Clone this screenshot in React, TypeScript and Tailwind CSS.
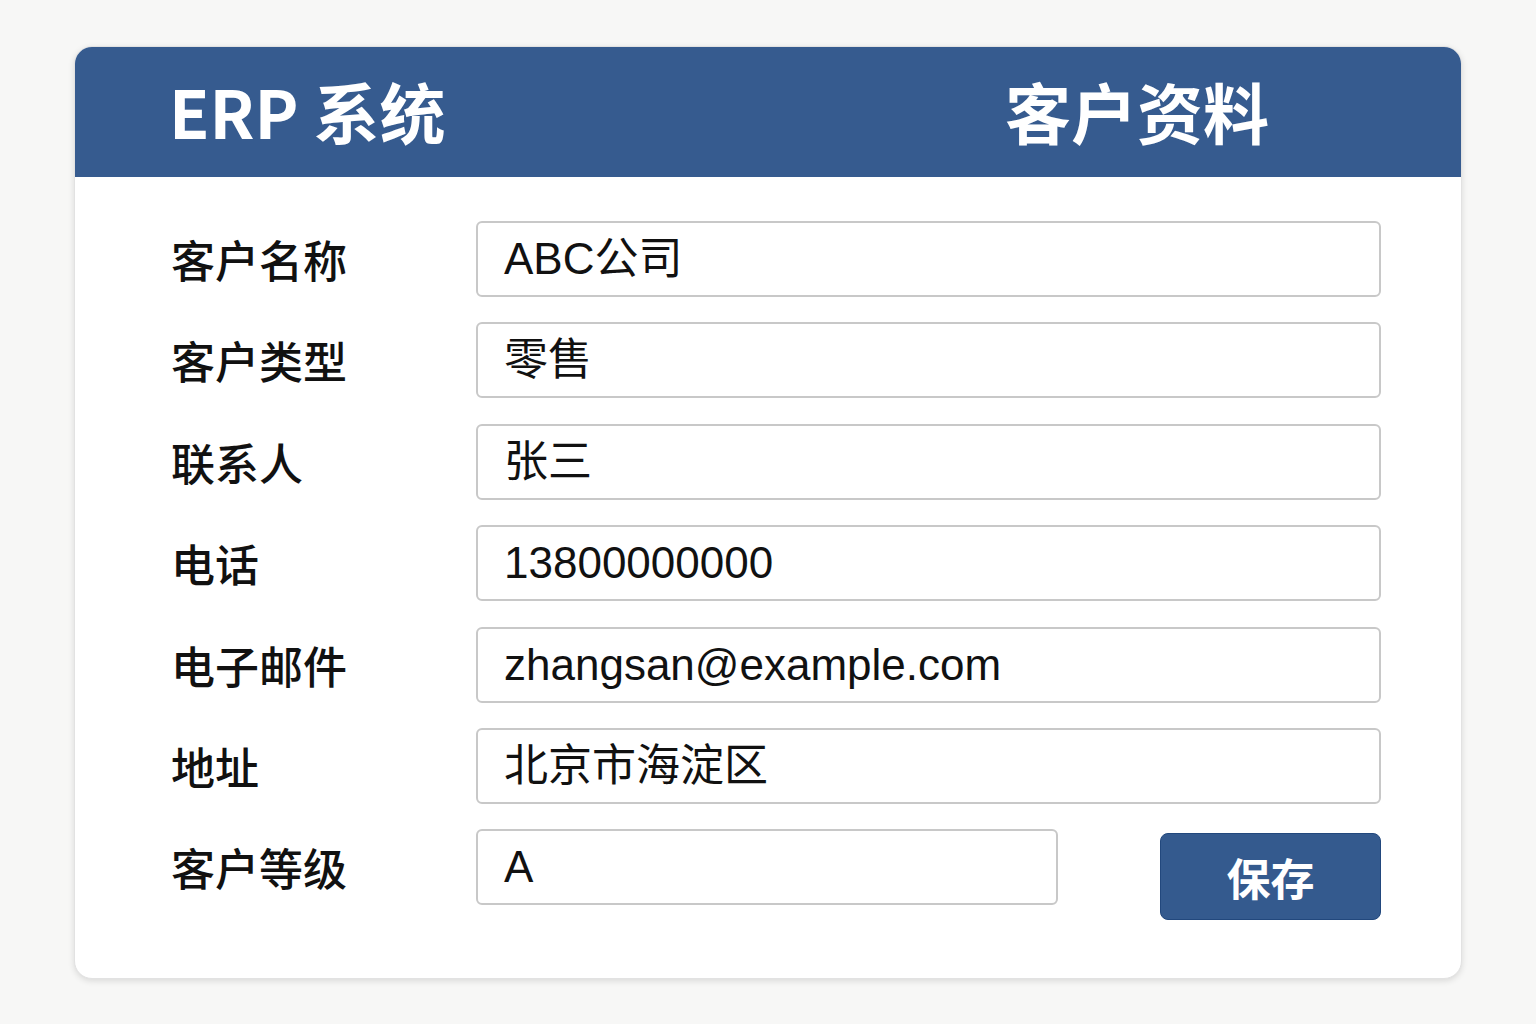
import React from "react";

const fields: { label: string; value: string }[] = [
  { label: "客户名称", value: "ABC公司" },
  { label: "客户类型", value: "零售" },
  { label: "联系人", value: "张三" },
  { label: "电话", value: "13800000000" },
  { label: "电子邮件", value: "zhangsan@example.com" },
  { label: "地址", value: "北京市海淀区" },
];

const cjk = "font-['Noto_Sans_CJK_SC',sans-serif]";
const mixed = "font-['Liberation_Sans','Noto_Sans_CJK_SC',sans-serif]";

function Field({ value, className = "" }: { value: string; className?: string }) {
  return (
    <div
      className={`h-[76px] flex items-center rounded-[6px] border-2 border-[#c8c8c8] bg-white pl-[26px] text-[44px] text-[#111] ${mixed} ${className}`}
    >
      {value}
    </div>
  );
}

export default function App() {
  return (
    <div className="min-h-[1024px] bg-[#f7f7f6] pt-[46px] pl-[74px]">
      <div className="w-[1388px] h-[933px] rounded-[18px] bg-white border border-[#e2e2e2] shadow-[0_2px_6px_rgba(0,0,0,0.12)] overflow-hidden">
        <div className={`h-[130px] bg-[#365b8f] flex items-center pl-[94px] pb-[4px] text-white text-[66px] font-bold ${cjk}`}>
          <span className="w-[836px] leading-none">ERP 系统</span>
          <span className="leading-none">客户资料</span>
        </div>
        <div className="pt-[44px] pl-[96px] pr-[80px] flex flex-col gap-[25.4px]">
          {fields.map((f) => (
            <div key={f.label} className="flex items-center">
              <div className={`w-[305px] text-[44px] font-medium text-[#111] ${cjk}`}>{f.label}</div>
              <Field value={f.value} className="flex-1" />
            </div>
          ))}
          <div className="flex items-start">
            <div className={`w-[305px] h-[76px] flex items-center text-[44px] font-medium text-[#111] ${cjk}`}>客户等级</div>
            <Field value="A" className="w-[582px]" />
            <button
              className={`ml-auto mt-[4px] w-[221px] h-[87px] rounded-[8px] bg-[#345a8e] border border-[#22487d] text-white text-[44px] font-bold ${cjk}`}
            >
              保存
            </button>
          </div>
        </div>
      </div>
    </div>
  );
}
